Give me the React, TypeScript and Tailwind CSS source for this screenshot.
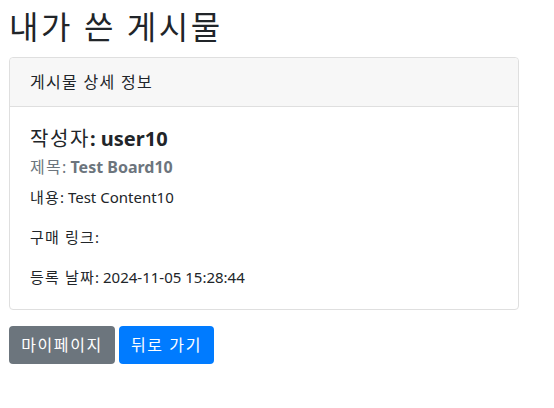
export default function App() {
  return (
    <div
      className="min-h-screen bg-white pl-[9px] pr-2 pt-2 text-[#212529]"
      style={{ fontFamily: '"Noto Sans", "Noto Sans CJK KR", sans-serif' }}
    >
      <h2 className="text-[32px] leading-[38px] font-normal tracking-[0.08em]">내가 쓴 게시물</h2>

      {/* Card */}
      <div className="mt-[11px] w-[510px] rounded border border-[#dfdfdf] bg-white">
        <div className="h-[49px] flex items-center px-5 bg-[#f7f7f7] border-b border-[#dfdfdf] rounded-t text-base tracking-[0.08em]">
          게시물 상세 정보
        </div>
        <div className="p-5">
          <h5 className="text-[20px] leading-6">
            <span className="tracking-[0.08em]">작성자</span>
            <span className="font-bold">: user10</span>
          </h5>
          <h6 className="mt-[7px] text-base leading-[19px] text-[#6c757d]">
            <span className="tracking-[0.08em]">제목</span>: <span className="font-bold">Test Board10</span>
          </h6>
          <p className="mt-2 text-[15px] leading-6">
            <span className="tracking-[0.08em]">내용</span>: Test Content10
          </p>
          <p className="mt-4 text-[15px] leading-6 tracking-[0.08em]">구매 링크:</p>
          <p className="mt-4 text-[15px] leading-6">
            <span className="tracking-[0.08em]">등록 날짜</span>: 2024-11-05 15:28:44
          </p>
        </div>
      </div>

      <div className="mt-4 flex gap-1">
        <button className="h-[38px] w-[106px] rounded bg-[#6c757d] text-white text-base tracking-[0.1em]">마이페이지</button>
        <button className="h-[38px] w-[95px] rounded bg-[#007bff] text-white text-base tracking-[0.1em]">뒤로 가기</button>
      </div>
    </div>
  );
}
